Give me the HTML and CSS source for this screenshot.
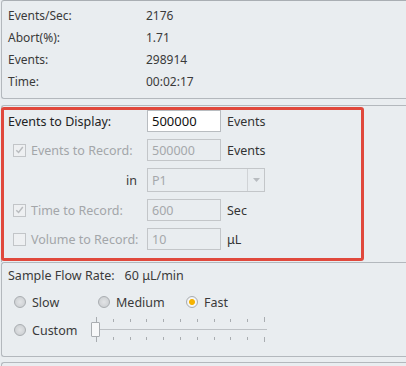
FILE: index.html
```html
<!DOCTYPE html>
<html>
<head>
<meta charset="utf-8">
<link rel="stylesheet" href="styles.css">
</head>
<body>
<div class="page">
  <div class="panel stats">
    <div class="srow"><span class="sk">Events/Sec:</span><span class="sv">2176</span></div>
    <div class="srow"><span class="sk">Abort(%):</span><span class="sv">1.71</span></div>
    <div class="srow"><span class="sk">Events:</span><span class="sv">298914</span></div>
    <div class="srow"><span class="sk">Time:</span><span class="sv">00:02:17</span></div>
  </div>
  <div class="panel record">
    <div class="redbox">
      <div class="frow">
        <span class="flabel plain">Events to Display:</span>
        <span class="inp active">500000</span>
        <span class="unit">Events</span>
      </div>
      <div class="frow">
        <span class="cb checked"><svg width="12" height="12" viewBox="0 0 12 12"><path d="M2.5 6.2 L5 8.7 L9.6 2.8" fill="none" stroke="#b9bcbf" stroke-width="1.6"/></svg></span>
        <span class="flabel dis">Events to Record:</span>
        <span class="inp">500000</span>
        <span class="unit">Events</span>
      </div>
      <div class="frow">
        <span class="inlabel">in</span>
        <span class="select"><span class="seltext">P1</span><span class="selbtn"><svg width="7" height="4" viewBox="0 0 7 4"><path d="M0 0 L7 0 L3.5 4 Z" fill="#b8bcc0"/></svg></span></span>
      </div>
      <div class="frow">
        <span class="cb checked"><svg width="12" height="12" viewBox="0 0 12 12"><path d="M2.5 6.2 L5 8.7 L9.6 2.8" fill="none" stroke="#b9bcbf" stroke-width="1.6"/></svg></span>
        <span class="flabel dis">Time to Record:</span>
        <span class="inp">600</span>
        <span class="unit">Sec</span>
      </div>
      <div class="frow">
        <span class="cb"></span>
        <span class="flabel dis">Volume to Record:</span>
        <span class="inp">10</span>
        <span class="unit">μL</span>
      </div>
    </div>
  </div>
  <div class="panel flow">
    <div class="rate"><span>Sample Flow Rate:</span><span class="rateval">60 μL/min</span></div>
    <div class="radios">
      <span class="radio"><span class="rb"></span>Slow</span>
      <span class="radio med"><span class="rb"></span>Medium</span>
      <span class="radio"><span class="rb on"></span>Fast</span>
    </div>
    <div class="customrow">
      <span class="radio"><span class="rb"></span>Custom</span>
      <div class="slider">
        <div class="ticks top">
          <i class="long"></i><i></i><i></i><i></i><i></i><i></i><i></i><i></i><i></i><i></i><i class="long"></i>
        </div>
        <div class="track"></div>
        <div class="ticks bottom">
          <i class="long"></i><i></i><i></i><i></i><i></i><i></i><i></i><i></i><i></i><i></i><i class="long"></i>
        </div>
        <div class="thumb"></div>
      </div>
    </div>
  </div>
  <div class="panel tail"></div>
</div>
</body>
</html>
```
FILE: styles.css
```css
html, body {
  margin: 0;
  padding: 0;
}
body {
  background: #e9edf0;
  font-family: "Noto Sans", "Open Sans", sans-serif;
  font-size: 12px;
  color: #3a3a3a;
  overflow: hidden;
  width: 406px;
  height: 366px;
}
.page {
  display: flex;
  flex-direction: column;
}
.panel {
  margin-left: 1px;
  width: 420px;
  border: 1px solid #b3b8bd;
  border-right: none;
  border-radius: 3px 0 0 3px;
  box-sizing: border-box;
}
.stats {
  height: 99px;
  padding: 3px 0 0 6px;
  border-top-color: #a9aeb3;
  margin-top: 0;
}
.srow {
  display: flex;
  height: 22px;
  align-items: center;
}
.sk {
  width: 138px;
}
.record {
  margin-top: 6px;
  height: 157px;
  border-bottom: none;
  border-radius: 3px 0 0 0;
  padding-top: 1px;
}
.redbox {
  margin-left: -1px;
  width: 363px;
  height: 154px;
  box-sizing: border-box;
  border: 3px solid #e0483c;
  border-radius: 3px;
  padding: 0 0 0 4px;
  display: flex;
  flex-direction: column;
  gap: 7px;
}
.frow {
  display: flex;
  align-items: center;
  height: 22px;
}
.frow:nth-child(3) { height: 24px; }
.flabel {
  width: 116px;
}
.plain {
  width: 139px;
  color: #222;
  font-size: 12.5px;
}
.dis {
  color: #a3a6a9;
  font-size: 12.5px;
}
.cb {
  width: 11px;
  height: 11px;
  border: 1px solid #c2c5c8;
  background: #eef0f2;
  margin: 0 5px 0 5px;
  display: flex;
  align-items: center;
  justify-content: center;
  flex: none;
}
.cb svg { display: block; }
.inp {
  width: 74px;
  height: 22px;
  box-sizing: border-box;
  border: 1px solid #c3c6c9;
  padding: 0 4px;
  display: flex;
  align-items: center;
  color: #a5a8ab;
  font-size: 12.5px;
}
.inp.active {
  background: #fff;
  color: #111;
  border-color: #b8bcc0;
  font-size: 13px;
}
.unit {
  margin-left: 6px;
  color: #333;
  font-size: 12.5px;
}
.inlabel {
  width: 139px;
  text-align: right;
  box-sizing: border-box;
  padding-right: 10px;
  font-size: 12.5px;
}
.select {
  width: 118px;
  height: 24px;
  box-sizing: border-box;
  border: 1px solid #c3c6c9;
  display: flex;
  color: #a5a8ab;
  font-size: 12.5px;
}
.seltext {
  flex: 1;
  padding-left: 4px;
  display: flex;
  align-items: center;
}
.selbtn {
  width: 16px;
  border-left: 1px solid #d0d3d6;
  display: flex;
  align-items: center;
  justify-content: center;
}
.flow {
  margin-top: 0;
  height: 95px;
  padding: 2px 0 0 6px;
}
.rate {
  height: 20px;
  display: flex;
  align-items: center;
  font-size: 12.5px;
}
.rateval { margin-left: 10px; }
.radios {
  display: flex;
  height: 28px;
  align-items: center;
  margin-top: 3px;
}
.radio {
  display: flex;
  align-items: center;
  font-size: 12.5px;
  width: 84px;
  padding-left: 6px;
  box-sizing: border-box;
}
.radio.med { width: 88px; }
.rb {
  width: 12px;
  height: 12px;
  border-radius: 50%;
  border: 1px solid #a9adb1;
  background: radial-gradient(circle at 50% 50%, #e2e4e6 0, #cfd2d5 70%, #c4c7ca 100%);
  box-sizing: border-box;
  margin-right: 6px;
  flex: none;
}
.rb.on {
  background: radial-gradient(circle, #f7b500 0, #f4b100 2.5px, #f6f7f8 3.5px, #e3e5e7 100%);
}
.customrow {
  display: flex;
  align-items: center;
  height: 28px;
}
.customrow .radio { width: 83px; }
.slider {
  position: relative;
  width: 176px;
  height: 28px;
}
.ticks {
  position: absolute;
  left: 5px;
  width: 169px;
  display: flex;
  justify-content: space-between;
}
.ticks i {
  display: block;
  width: 1px;
  height: 3px;
  background: #a9adb1;
}
.ticks.top { top: 1px; align-items: flex-end; height: 5px; }
.ticks.bottom { top: 21px; height: 5px; }
.ticks i.long { height: 5px; }
.track {
  position: absolute;
  left: 4px;
  width: 172px;
  top: 13px;
  height: 1px;
  background: #bdc1c5;
}
.thumb {
  position: absolute;
  left: 0;
  top: 6px;
  width: 9px;
  height: 15px;
  box-sizing: border-box;
  border: 1px solid #a9adb1;
  background: #f7f8f9;
  border-radius: 1px;
}
.tail {
  margin-top: 5px;
  height: 10px;
}
```
